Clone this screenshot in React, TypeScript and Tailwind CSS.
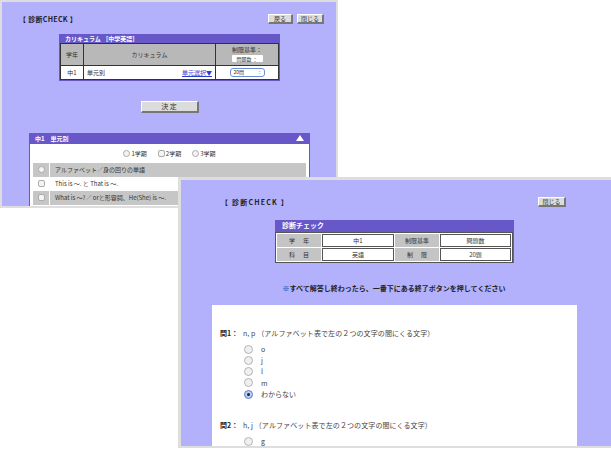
const font = { fontFamily: '"Noto Sans CJK JP", "Liberation Sans", sans-serif' }

function Btn({ children, className }: { children: React.ReactNode; className: string }) {
  return (
    <div
      className={`flex items-center justify-center bg-[#dcdcdc] border-t border-l border-white border-r-2 border-b-2 border-r-[#777] border-b-[#777] text-[#333] text-[6px] leading-none ${className}`}
    >
      {children}
    </div>
  )
}

function Radio({ on }: { on?: boolean }) {
  return (
    <div
      className={`w-[9px] h-[9px] rounded-full border flex items-center justify-center shrink-0 ${
        on ? 'border-[#5f7fc8] bg-[#b9cdf0]' : 'border-[#b4b4b4] bg-[#f0f0f0]'
      }`}
    >
      {on && <div className="w-[3px] h-[3px] rounded-full bg-[#223]" />}
    </div>
  )
}

function Check({ round }: { round?: boolean }) {
  return <div className={`w-[7px] h-[7px] border border-[#aaa] bg-[#f4f4f4] shrink-0 ${round ? 'rounded-full' : 'rounded-[2px]'}`} />
}

function Question({ no, text, options, selected }: { no: string; text: string; options: string[]; selected?: string }) {
  return (
    <div>
      <div className="flex text-[7px] leading-[10px] text-[#444] h-[10px]">
        <span className="font-bold w-[23px] text-[#222]">{no}：</span>
        <span className="tracking-[0.1px]">{text}</span>
      </div>
      <div className="mt-[6px] ml-[24px] flex flex-col">
        {options.map((o) => (
          <div key={o} className="flex items-center h-[11.25px] gap-[8px] text-[7px] text-[#444]">
            <Radio on={o === selected} />
            <span>{o}</span>
          </div>
        ))}
      </div>
    </div>
  )
}

function BackWindow() {
  return (
    <div className="absolute left-0 top-0 w-[338px] h-[208px] bg-[#b3b1fb] border-2 border-[#dedede] overflow-hidden">
      <div className="flex justify-between items-center pl-[17px] pr-[12px] pt-[12px]">
        <span className="text-[7px] font-bold text-[#222] tracking-[0.3px]">【 診断CHECK 】</span>
        <div className="flex gap-[4px]">
          <Btn className="w-[25px] h-[10px]">戻る</Btn>
          <Btn className="w-[27px] h-[10px]">閉じる</Btn>
        </div>
      </div>

      <div className="mt-[9px] ml-[57px] w-[221px] bg-[#6757c8] px-[1px] pb-[1px]">
        <div className="h-[9px] flex items-center pl-[5px] text-[6px] text-white font-bold">カリキュラム ［中学英語］</div>
        <div className="grid grid-cols-[22px_131px_1fr] grid-rows-[21px_13px] gap-[1px] bg-[#333] p-[1px] text-[6px] text-[#333]">
          <div className="bg-[#b8b8b8] flex items-center justify-center">学年</div>
          <div className="bg-[#b8b8b8] flex items-center justify-center">カリキュラム</div>
          <div className="bg-[#b8b8b8] flex flex-col items-center justify-center gap-[1px] leading-[8px]">
            <span>制限基準：</span>
            <div className="w-[31px] h-[7px] bg-white rounded-[1px] flex items-center justify-center text-[5px]">問題数 ：</div>
          </div>
          <div className="bg-white flex items-center justify-center">中1</div>
          <div className="bg-white flex items-center justify-between px-[3px]">
            <span>単元別</span>
            <span className="text-[#2a3fd0] underline">単元選択▼</span>
          </div>
          <div className="bg-white flex items-center justify-center">
            <div className="w-[35px] h-[9px] border border-[#6c8fd8] rounded-[3px] flex items-center justify-between px-[3px] text-[5px]">
              <span>20問</span>
              <span>:</span>
            </div>
          </div>
        </div>
      </div>

      <div className="mt-[20px] flex justify-center pl-[1px]">
        <Btn className="w-[58px] h-[12px] text-[7px]">決 定</Btn>
      </div>

      <div className="mt-[20px] ml-[27px] w-[281px] h-[80px] bg-white border-x border-[#6757c8]">
        <div className="h-[11px] bg-[#6757c8] flex items-center justify-between pl-[5px] pr-[5px] text-[6px] text-white font-bold">
          <span>中1　単元別</span>
          <span className="w-0 h-0 border-x-[4px] border-x-transparent border-b-[6px] border-b-white" />
        </div>
        <div className="h-[19px] flex items-center justify-center gap-[11px] text-[6px] text-[#333]">
          <div className="flex items-center gap-[1px]"><Check round />1学期</div>
          <div className="flex items-center gap-[1px]"><Check />2学期</div>
          <div className="flex items-center gap-[1px]"><Check round />3学期</div>
        </div>
        <div className="mx-[3px] text-[6px] text-[#333] flex flex-col gap-[1px]">
          <div className="h-[14px] flex items-center bg-[#c6c6c6]">
            <div className="w-[16px] flex justify-center"><Check round /></div>
            <div className="w-[1px] h-full bg-white" />
            <span className="pl-[5px]">アルファベット／身の回りの単語</span>
          </div>
          <div className="h-[12px] flex items-center">
            <div className="w-[16px] flex justify-center"><Check /></div>
            <div className="w-[1px] h-full bg-white" />
            <span className="pl-[5px]">This is ～. と That is ～.</span>
          </div>
          <div className="h-[14px] flex items-center bg-[#c6c6c6]">
            <div className="w-[16px] flex justify-center"><Check /></div>
            <div className="w-[1px] h-full bg-white" />
            <span className="pl-[5px]">What is ～?／ orと形容詞、He(She) is ～.</span>
          </div>
        </div>
      </div>
    </div>
  )
}

function FrontWindow() {
  return (
    <div className="absolute left-[178px] top-[177px] w-[433px] h-[271px] bg-[#b3b1fb] border-[3px] border-b-2 border-r-0 border-[#dedede] overflow-hidden">
      <div className="flex justify-between items-center pl-[40px] pr-[45px] pt-[17px]">
        <span className="text-[7px] font-bold text-[#222] tracking-[1.2px]">【 診断CHECK 】</span>
        <Btn className="w-[28px] h-[10px]">閉じる</Btn>
      </div>

      <div className="mt-[12px] ml-[94px] w-[239px] bg-[#6757c8]">
        <div className="h-[12px] flex items-center pl-[7px] text-[7px] text-white font-bold">診断チェック</div>
        <div className="bg-white p-[1px] border border-[#555] grid grid-cols-[44px_72px_44px_1fr] grid-rows-[13px_13px] gap-[1px] text-[6px] text-[#333] mr-[1px]">
          <div className="bg-[#c4c4c4] flex items-center justify-center gap-[8px]"><span>学</span><span>年</span></div>
          <div className="border border-[#555] flex items-center justify-center">中1</div>
          <div className="bg-[#c4c4c4] flex items-center justify-center">制限基準</div>
          <div className="border border-[#555] flex items-center justify-center">問題数</div>
          <div className="bg-[#c4c4c4] flex items-center justify-center gap-[8px]"><span>科</span><span>目</span></div>
          <div className="border border-[#555] flex items-center justify-center">英語</div>
          <div className="bg-[#c4c4c4] flex items-center justify-center gap-[8px]"><span>制</span><span>限</span></div>
          <div className="border border-[#555] flex items-center justify-center">20題</div>
        </div>
      </div>

      <div className="mt-[21px] h-[10px] flex items-center justify-center pr-[4px] text-[7px] font-bold text-[#222]">
        ※すべて解答し終わったら、一番下にある終了ボタンを押してください
      </div>

      <div className="mt-[11px] ml-[31px] w-[365px] h-[150px] bg-white pt-[23px] pl-[8px] overflow-hidden">
        <Question no="問1" text="n, p （アルファベット表で左の２つの文字の間にくる文字）" options={['o', 'j', 'l', 'm', 'わからない']} selected="わからない" />
        <div className="mt-[20px]">
          <Question no="問2" text="h, j （アルファベット表で左の２つの文字の間にくる文字）" options={['g']} />
        </div>
      </div>
    </div>
  )
}

export default function App() {
  return (
    <div className="relative w-[611px] h-[450px] bg-white overflow-hidden" style={font}>
      <BackWindow />
      <FrontWindow />
    </div>
  )
}
